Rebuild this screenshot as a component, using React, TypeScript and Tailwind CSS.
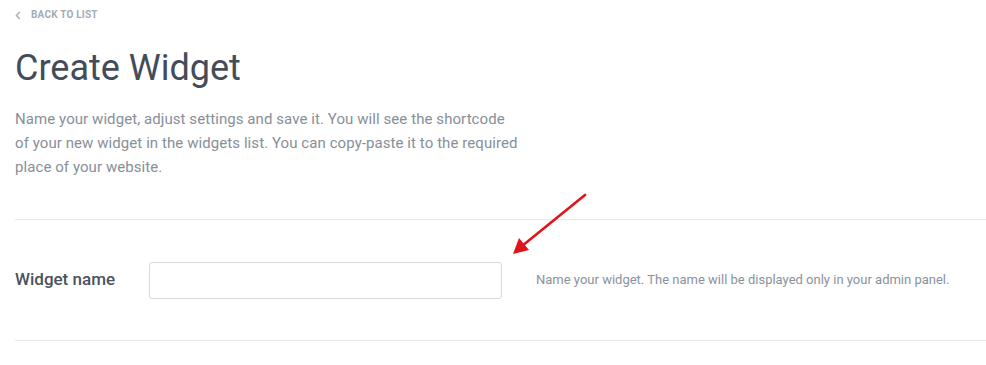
import React from 'react';

export default function App() {
  return (
    <div className="relative min-h-[365px] w-full bg-white font-['Roboto',sans-serif] pl-[15px]">
      <a className="flex items-center gap-[9px] pt-[9px] h-[21px] text-[10px] font-bold uppercase tracking-[0.02em] text-[#a3acb7] leading-[12px]">
        <svg className="w-[6px] h-[9px]" viewBox="0 0 6 9" fill="none">
          <path d="M4.8 1 L1.4 4.5 L4.8 8" stroke="#a3acb7" strokeWidth="1.4" />
        </svg>
        <span className="ml-[1px]">Back to list</span>
      </a>

      <h1 className="mt-[24px] text-[36px] leading-[46px] font-normal text-[#434c58]">Create Widget</h1>

      <p className="mt-[16px] w-[505px] text-[15px] leading-[24px] tracking-[0.005em] text-[#878f99]">
        Name your widget, adjust settings and save it. You will see the shortcode of your new widget in the widgets list. You can copy-paste it to the required place of your website.
      </p>

      <div className="mt-[40px] border-t border-[#e6e9ec]" />

      <div className="flex items-center h-[120px]">
        <label className="w-[134px] shrink-0 text-[17px] font-medium text-[#4a535e]">Widget name</label>
        <input
          type="text"
          className="w-[353px] h-[37px] rounded-[3px] border border-[#d4dce2] bg-white outline-none px-3"
        />
        <span className="ml-[34px] text-[13px] text-[#8a929c]">
          Name your widget. The name will be displayed only in your admin panel.
        </span>
      </div>

      <div className="border-t border-[#e6e9ec]" />

      <svg className="absolute left-[508px] top-[190px] w-[82px] h-[70px]" viewBox="0 0 82 70" fill="none">
        <path d="M77 5 L14 56" stroke="#e0141b" strokeWidth="2.6" strokeLinecap="round" />
        <path d="M5 64 L11 48 L21 60 Z" fill="#e0141b" />
      </svg>
    </div>
  );
}
